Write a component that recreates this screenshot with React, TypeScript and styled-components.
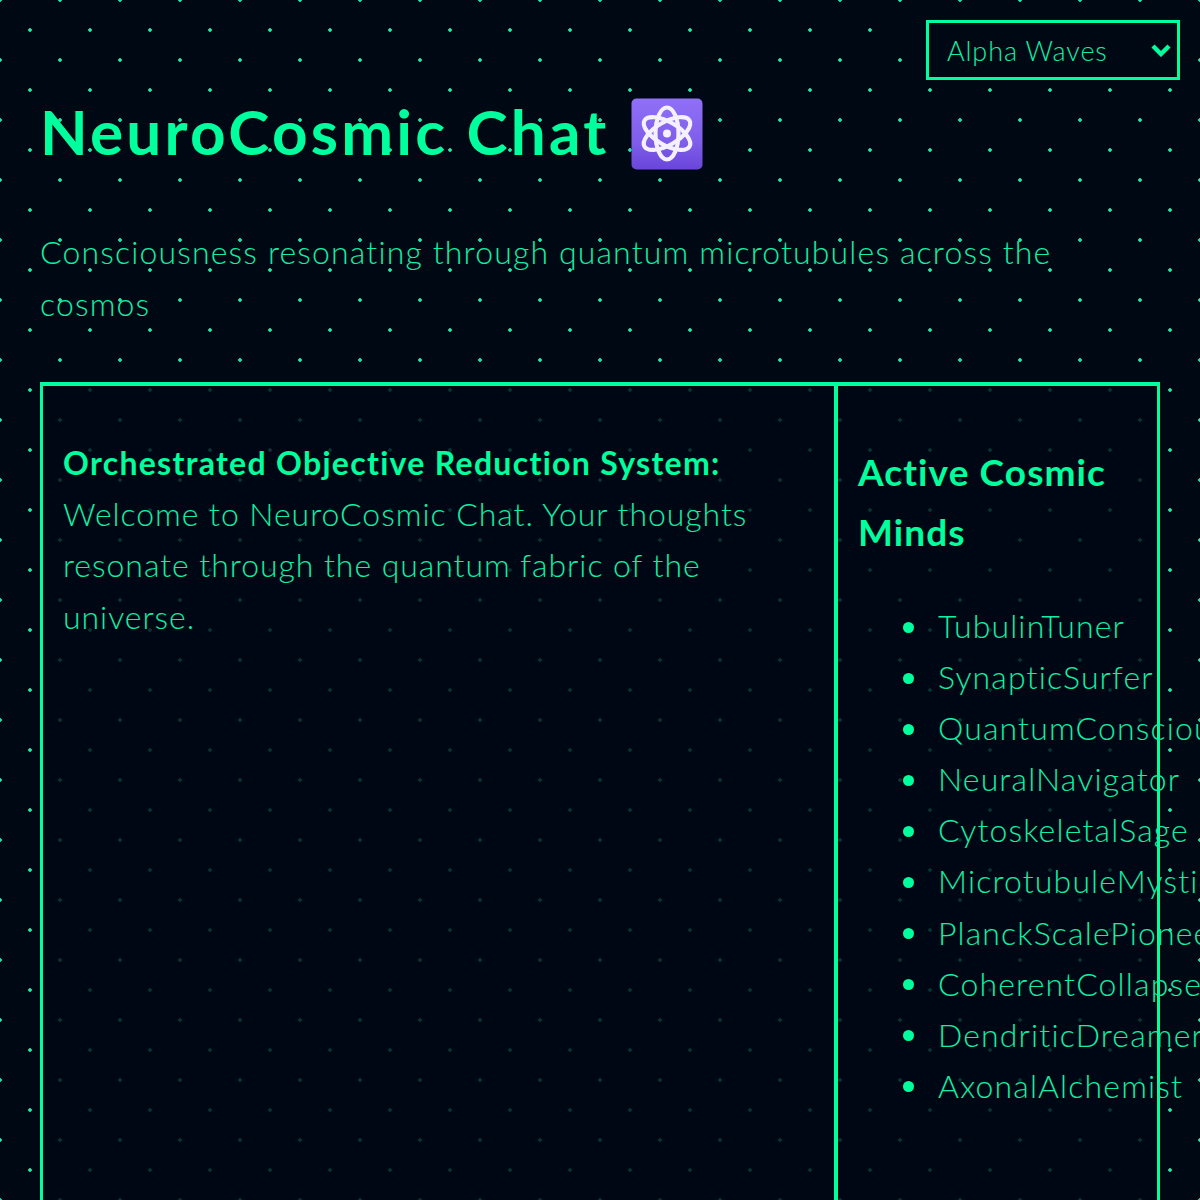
import React from 'react';
import styled, { createGlobalStyle } from 'styled-components';

const GlobalStyle = createGlobalStyle`
  html, body {
    margin: 0;
    height: 100%;
    overflow: hidden;
  }

  body {
    background-color: #000814;
    background-image:
      radial-gradient(#1de9a8 1.5px, transparent 2px),
      radial-gradient(#1de9a8 1.5px, transparent 2px);
    background-size: 60px 60px;
    background-position: 0 0, 30px 30px;
    color: #10f0a5;
    font-family: "Lato", "Noto Sans", sans-serif;
    font-weight: 300;
  }
`;

const Page = styled.div`
  position: relative;
  box-sizing: border-box;
  height: 1200px;
  padding: 0 40px;
  overflow: hidden;
`;

const WaveSelect = styled.div`
  position: absolute;
  top: 20px;
  right: 20px;
  box-sizing: border-box;
  width: 254px;
  height: 60px;
  padding: 0 6px 0 18px;
  display: flex;
  align-items: center;
  justify-content: space-between;
  border: 3px solid #00ff9d;
  background: #000814;
  font-size: 27px;
  letter-spacing: 0.9px;
`;

const Title = styled.h1`
  margin: 0;
  padding-top: 91px;
  height: 80px;
  display: flex;
  align-items: center;
  gap: 22px;
  color: #00ff9d;
  font-size: 62px;
  font-weight: 700;
  letter-spacing: 3.2px;

  svg {
    margin-top: 6px;
  }
`;

const Tagline = styled.p`
  margin: 55px 0 52px;
  font-size: 32px;
  line-height: 52px;
  letter-spacing: 1.15px;
`;

const Panels = styled.div`
  display: grid;
  grid-template-columns: 798px 322px;
  height: 900px;
`;

const ChatPanel = styled.section`
  box-sizing: border-box;
  padding: 51px 20px;
  border: solid #00ff9d;
  border-width: 4px 4px 0 3px;
  background: rgba(0, 8, 20, 0.8);
  font-size: 32px;
  line-height: 51.2px;
  letter-spacing: 0.95px;
`;

const SystemName = styled.strong`
  display: block;
  color: #00ff9d;
  font-weight: 700;
  letter-spacing: 1.3px;
`;

const Sidebar = styled.aside`
  box-sizing: border-box;
  padding: 56px 20px;
  border: solid #00ff9d;
  border-width: 4px 3px 0 0;
  background: rgba(0, 8, 20, 0.8);
`;

const SidebarTitle = styled.h2`
  margin: 0 0 38px;
  color: #00ff9d;
  font-size: 37px;
  line-height: 60px;
  font-weight: 700;
  letter-spacing: 1.1px;
`;

const UserList = styled.ul`
  margin: 0;
  padding: 0 0 0 45px;
  list-style: none;
  font-size: 32px;
  line-height: 51.1px;
  letter-spacing: 1.15px;
  white-space: nowrap;
`;

const UserRow = styled.li`
  display: flex;
  align-items: center;
  gap: 24px;

  &::before {
    content: '';
    flex: none;
    width: 11px;
    height: 11px;
    margin-top: 3px;
    border-radius: 50%;
    background: #00ff9d;
  }
`;

const users = [
  'TubulinTuner',
  'SynapticSurfer',
  'QuantumConsciousness',
  'NeuralNavigator',
  'CytoskeletalSage',
  'MicrotubuleMystic',
  'PlanckScalePioneer',
  'CoherentCollapse',
  'DendriticDreamer',
  'AxonalAlchemist',
];

function AtomIcon() {
  return (
    <svg width="72" height="72" viewBox="0 0 72 72" fill="none">
      <defs>
        <linearGradient id="atomFill" x1="0" y1="0" x2="0" y2="1">
          <stop offset="0" stopColor="#9070f6" />
          <stop offset="0.6" stopColor="#7f5fea" />
          <stop offset="1" stopColor="#6a45da" />
        </linearGradient>
      </defs>
      <rect x="0.5" y="0.5" width="71" height="71" rx="5" fill="url(#atomFill)" />
      <g stroke="#f4f0ff" strokeWidth="4.2">
        <ellipse cx="36" cy="35.5" rx="26" ry="11.5" transform="rotate(90 36 35.5)" />
        <ellipse cx="36" cy="35.5" rx="26" ry="11.5" transform="rotate(30 36 35.5)" />
        <ellipse cx="36" cy="35.5" rx="26" ry="11.5" transform="rotate(-30 36 35.5)" />
      </g>
      <circle cx="36" cy="35.5" r="4" fill="#f4f0ff" />
    </svg>
  );
}

function App() {
  return (
    <Page>
      <GlobalStyle />
      <WaveSelect>
        Alpha Waves
        <svg width="20" height="14" viewBox="0 0 20 14" fill="none" stroke="#00ff9d" strokeWidth="4.4">
          <path d="M2 3l8 8 8-8" />
        </svg>
      </WaveSelect>
      <Title>
        NeuroCosmic Chat
        <AtomIcon />
      </Title>
      <Tagline>Consciousness resonating through quantum microtubules across the cosmos</Tagline>
      <Panels>
        <ChatPanel>
          <SystemName>Orchestrated Objective Reduction System:</SystemName>
          Welcome to NeuroCosmic Chat. Your thoughts resonate through the quantum fabric of the universe.
        </ChatPanel>
        <Sidebar>
          <SidebarTitle>Active Cosmic Minds</SidebarTitle>
          <UserList>
            {users.map(name => (
              <UserRow key={name}>{name}</UserRow>
            ))}
          </UserList>
        </Sidebar>
      </Panels>
    </Page>
  );
}

export default App;
